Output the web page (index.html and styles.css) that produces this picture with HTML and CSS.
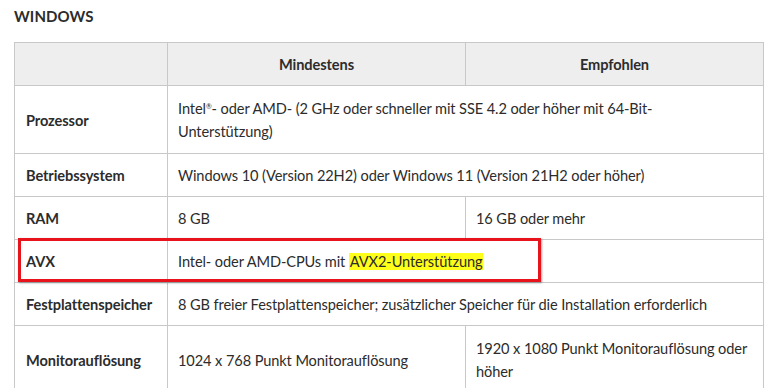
FILE: index.html
```html
<!DOCTYPE html>
<html lang="de">
<head>
<meta charset="utf-8">
<title>Systemanforderungen</title>
<link rel="stylesheet" href="styles.css">
</head>
<body>
<section class="specs">
  <h3 class="specs-title">WINDOWS</h3>
  <div class="table-wrap">
    <table class="spec-table">
      <colgroup>
        <col class="col-label">
        <col class="col-min">
        <col class="col-rec">
      </colgroup>
      <thead>
        <tr>
          <th></th>
          <th>Mindestens</th>
          <th>Empfohlen</th>
        </tr>
      </thead>
      <tbody>
        <tr class="row-tall">
          <td class="label">Prozessor</td>
          <td colspan="2">Intel<sup class="reg">®</sup>- oder AMD- (2 GHz oder schneller mit SSE 4.2 oder höher mit 64-Bit-<br>Unterstützung)</td>
        </tr>
        <tr>
          <td class="label">Betriebssystem</td>
          <td colspan="2">Windows 10 (Version 22H2) oder Windows 11 (Version 21H2 oder höher)</td>
        </tr>
        <tr>
          <td class="label">RAM</td>
          <td>8 GB</td>
          <td>16 GB oder mehr</td>
        </tr>
        <tr>
          <td class="label">AVX</td>
          <td colspan="2">Intel- oder AMD-CPUs mit <mark class="hl">AVX2-Unterstützung</mark></td>
        </tr>
        <tr>
          <td class="label">Festplattenspeicher</td>
          <td colspan="2">8 GB freier Festplattenspeicher; zusätzlicher Speicher für die Installation erforderlich</td>
        </tr>
        <tr class="row-tall">
          <td class="label">Monitorauflösung</td>
          <td>1024 x 768 Punkt Monitorauflösung</td>
          <td>1920 x 1080 Punkt Monitorauflösung oder höher</td>
        </tr>
      </tbody>
    </table>
    <div class="callout" aria-hidden="true"></div>
  </div>
</section>
</body>
</html>
```

FILE: styles.css
```css
html, body {
  margin: 0;
  padding: 0;
  background: #ffffff;
}

body {
  font-family: Lato, "Noto Sans", sans-serif;
  font-size: 14.6px;
  letter-spacing: -0.1px;
  color: #2c2c2c;
}

.specs {
  padding: 4px 7px 0 14px;
}

.specs-title {
  margin: 0 0 14px 0;
  font-size: 15px;
  font-weight: 700;
  line-height: 24px;
  letter-spacing: 0.1px;
}

.table-wrap {
  position: relative;
}

.spec-table {
  border-collapse: collapse;
  width: 749px;
  table-layout: fixed;
}

.col-label { width: 153px; }
.col-min { width: 298px; }
.col-rec { width: 298px; }

.spec-table th,
.spec-table td {
  border: 1px solid #c8c8c8;
  padding: 10px 10px 9px 10px;
  line-height: 23px;
  vertical-align: middle;
  text-align: left;
}

.spec-table th {
  background: #eeeeee;
  font-weight: 700;
  text-align: center;
  height: 23px;
}

.spec-table td.label {
  font-weight: 700;
  padding-left: 11px;
}

.row-tall td {
  padding-top: 11px;
  padding-bottom: 10px;
}

.reg {
  font-size: 7px;
  vertical-align: 5px;
  line-height: 0;
}

.hl {
  background: #ffff1a;
  color: inherit;
  padding: 0 1px;
}

/* red marker framing the AVX row */
.callout {
  position: absolute;
  left: 4px;
  top: 196px;
  width: 517px;
  height: 38px;
  border: 3px solid #e8141c;
  box-shadow: 1px 1px 2px rgba(0, 0, 0, 0.35);
  pointer-events: none;
}
```
